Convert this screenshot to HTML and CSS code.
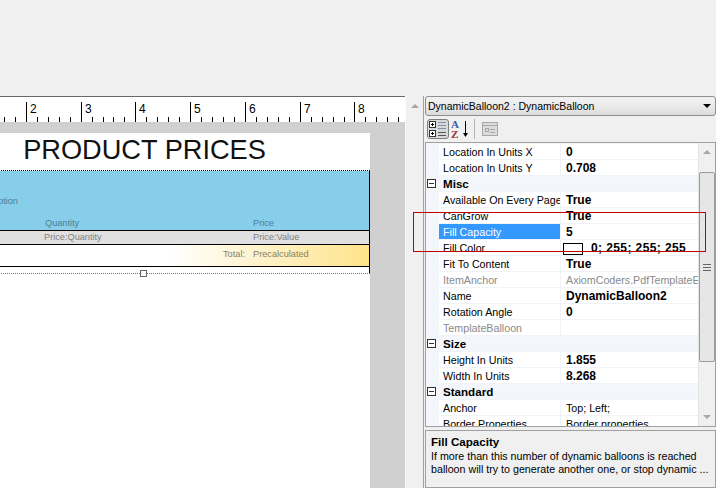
FILE: index.html
```html
<!DOCTYPE html>
<html>
<head>
    <title>Template Editor</title>
    <link rel="stylesheet" href="styles.css">
</head>
<body>

<div class="top-band"></div>

<div class="main">
    <div class="designer">
        <svg class="ruler" width="405" height="25" viewBox="0 0 405 25">
            <path class="ticks" d="M26.5 5V25M81.5 5V25M135.5 5V25M190.5 5V25M245.5 5V25M300.5 5V25M354.5 5V25M4.5 20V25M15.5 20V25M37.5 20V25M48.5 20V25M59.5 20V25M70.5 20V25M92.5 20V25M103.5 20V25M113.5 20V25M124.5 20V25M146.5 20V25M157.5 20V25M168.5 20V25M179.5 20V25M201.5 20V25M212.5 20V25M223.5 20V25M234.5 20V25M256.5 20V25M267.5 20V25M278.5 20V25M289.5 20V25M311.5 20V25M322.5 20V25M333.5 20V25M344.5 20V25M365.5 20V25M376.5 20V25M387.5 20V25M398.5 20V25"/>
            <text x="30" y="16">2</text>
            <text x="85" y="16">3</text>
            <text x="139" y="16">4</text>
            <text x="194" y="16">5</text>
            <text x="249" y="16">6</text>
            <text x="304" y="16">7</text>
            <text x="358" y="16">8</text>
        </svg>
        <div class="canvas">
            <div class="page">
                <div class="title">PRODUCT PRICES</div>
                <div class="balloon">
                    <div class="band band-head">
                        <span class="desc">Description</span>
                        <span>Quantity</span>
                        <span>Price</span>
                    </div>
                    <div class="band band-row">
                        <span></span>
                        <span class="shift">Price:Quantity</span>
                        <span>Price:Value</span>
                    </div>
                    <div class="band band-total">
                        <span></span>
                        <span class="total-label">Total:</span>
                        <span>Precalculated</span>
                    </div>
                    <div class="balloon-end"></div>
                </div>
                <div class="handle"></div>
            </div>
        </div>
    </div>

    <div class="side-scroll"><span class="arrow-up"></span></div>

    <div class="props">
        <div class="combo">
            <span>DynamicBalloon2 : DynamicBalloon</span>
            <span class="arrow-down"></span>
        </div>
        <div class="toolbar">
            <div class="tool-btn">
                <svg width="20" height="18" viewBox="0 0 20 18">
                    <rect x="1.5" y="1.5" width="6" height="6" fill="#fff" stroke="#333"/>
                    <rect x="1.5" y="10.5" width="6" height="6" fill="#fff" stroke="#333"/>
                    <path d="M3 4.5H6M4.5 3V6M3 13.5H6M4.5 12V15" stroke="#000"/>
                    <path d="M10 2.5H18M10 5.5H18M10 8.5H18" stroke="#7d93ad"/>
                    <path d="M10 12.5H18M10 15.5H18" stroke="#555"/>
                </svg>
            </div>
            <svg class="sort-icon" width="20" height="20" viewBox="0 0 20 20">
                <text class="sort-a" x="0" y="9">A</text>
                <text class="sort-z" x="0" y="19">Z</text>
                <path d="M14.5 2V16" stroke="#000"/>
                <path d="M12 14H17L14.5 18Z" fill="#000"/>
            </svg>
            <div class="tool-sep"></div>
            <svg class="pages-icon" width="18" height="18" viewBox="0 0 18 18">
                <rect x="1.5" y="2.5" width="15" height="13" fill="#dcdcdc" stroke="#a8a8a8"/>
                <path d="M1.5 5.5H16.5" stroke="#a8a8a8"/>
                <rect x="4.5" y="8.5" width="3" height="3" fill="none" stroke="#a8a8a8"/>
                <path d="M9 9.5H14M9 12.5H14" stroke="#a8a8a8"/>
            </svg>
        </div>
        <div class="grid">
            <div class="rows">
                <div class="row"><span class="name">Location In Units X</span><span class="value">0</span></div>
                <div class="row"><span class="name">Location In Units Y</span><span class="value">0.708</span></div>
                <div class="row cat"><span class="box"></span>Misc</div>
                <div class="row"><span class="name">Available On Every Page</span><span class="value">True</span></div>
                <div class="row"><span class="name">CanGrow</span><span class="value">True</span></div>
                <div class="row selected"><span class="name">Fill Capacity</span><span class="value">5</span></div>
                <div class="row"><span class="name">Fill Color</span><span class="value color-value"><i class="swatch"></i>0; 255; 255; 255</span></div>
                <div class="row"><span class="name">Fit To Content</span><span class="value">True</span></div>
                <div class="row muted"><span class="name">ItemAnchor</span><span class="value">AxiomCoders.PdfTemplateEditor</span></div>
                <div class="row"><span class="name">Name</span><span class="value">DynamicBalloon2</span></div>
                <div class="row"><span class="name">Rotation Angle</span><span class="value">0</span></div>
                <div class="row muted"><span class="name">TemplateBalloon</span><span class="value"></span></div>
                <div class="row cat"><span class="box"></span>Size</div>
                <div class="row"><span class="name">Height In Units</span><span class="value">1.855</span></div>
                <div class="row"><span class="name">Width In Units</span><span class="value">8.268</span></div>
                <div class="row cat"><span class="box"></span>Standard</div>
                <div class="row"><span class="name">Anchor</span><span class="value plain">Top; Left;</span></div>
                <div class="row"><span class="name">Border Properties</span><span class="value plain">Border properties</span></div>
            </div>
            <div class="scrollbar">
                <span class="arrow-up"></span>
                <div class="thumb"><div class="grip"></div></div>
                <span class="arrow-down small"></span>
            </div>
        </div>
        <div class="help">
            <div class="help-title">Fill Capacity</div>
            <div class="help-text">If more than this number of dynamic balloons is reached<br>balloon will try to generate another one, or stop dynamic ...</div>
        </div>
    </div>
</div>

<div class="red-box"></div>

</body>
</html>
```

FILE: styles.css
```css
* {
    box-sizing: border-box;
    margin: 0;
    padding: 0;
}
body {
    font-family: 'Liberation Sans', Arial, sans-serif;
    font-size: 10.7px;
    background-color: #f0f0f0;
    width: 716px;
    height: 488px;
    overflow: hidden;
    position: relative;
}
.top-band {
    height: 96px;
    background-color: #f0f0f0;
}
.main {
    display: flex;
    height: 392px;
}

/* designer side */
.designer {
    width: 405px;
    display: flex;
    flex-direction: column;
    overflow: hidden;
    border-top: 1px solid #696969;
}
.ruler {
    display: block;
    flex: none;
    background-color: #fff;
}
.ruler .ticks {
    stroke: #000;
    fill: none;
}
.ruler text {
    font-family: 'Liberation Sans', Arial, sans-serif;
    font-size: 12px;
    fill: #000;
}
.canvas {
    flex: 1;
    background-color: #d0d0d0;
    padding-top: 11px;
    overflow: hidden;
}
.page {
    width: 453px;
    height: 400px;
    margin-left: -83px;
    background-color: #fff;
    position: relative;
}
.title {
    height: 38px;
    padding-left: 2px;
    font-size: 27.2px;
    line-height: 33px;
    text-align: center;
    color: #111;
    border-bottom: 1px dotted #000;
}
.balloon {
    border-right: 1px solid #000;
    border-bottom: 1px dotted #777;
    height: 103px;
}
.band {
    display: grid;
    grid-template-columns: 128px 208px 1fr;
    font-size: 9.2px;
    border-bottom: 1px solid #000;
}
.band-head {
    height: 60px;
    background-color: #87ceeb;
    color: #4b7d96;
    align-items: end;
    padding-bottom: 2px;
}
.desc {
    padding-left: 55px;
    margin-bottom: 22px;
}
.band-row {
    height: 14px;
    background-color: #e0e0e0;
    color: #808080;
    line-height: 13px;
}
.shift {
    margin-left: -1px;
}
.band-total {
    height: 22px;
    background: linear-gradient(to right, #fff 56%, #ffe38a 100%);
    color: #8a8060;
    line-height: 19px;
}
.total-label {
    text-align: right;
    padding-right: 8px;
}
.handle {
    position: absolute;
    left: 223px;
    top: 137px;
    width: 7px;
    height: 7px;
    background-color: #fff;
    border: 1px solid #666;
}

.side-scroll {
    width: 19px;
    background-color: #f0f0f0;
    border-left: 1px solid #fafafa;
    border-right: 1px solid #a0a0a0;
    position: relative;
}
.side-scroll .arrow-up {
    position: absolute;
    left: 5px;
    top: 8px;
}
.arrow-up {
    display: block;
    width: 0;
    height: 0;
    border-left: 4px solid transparent;
    border-right: 4px solid transparent;
    border-bottom: 4px solid #a6a6a6;
}
.arrow-down {
    display: block;
    width: 0;
    height: 0;
    border-left: 4px solid transparent;
    border-right: 4px solid transparent;
    border-top: 4px solid #000;
}
.arrow-down.small {
    border-top-color: #a6a6a6;
}

/* property grid */
.props {
    width: 292px;
    display: flex;
    flex-direction: column;
    padding-left: 1px;
}
.combo {
    height: 20px;
    flex: none;
    display: flex;
    align-items: center;
    justify-content: space-between;
    padding: 0 4px 0 2px;
    border: 1px solid #8e8f8f;
    border-radius: 3px;
    font-size: 10.5px;
    background: linear-gradient(#f2f2f2 0%, #ebebeb 50%, #dadada 100%);
}
.toolbar {
    height: 26px;
    flex: none;
    display: flex;
    align-items: center;
    padding-left: 2px;
}
.tool-btn {
    width: 22px;
    height: 20px;
    display: flex;
    align-items: center;
    justify-content: center;
    background-color: #d9d9d9;
    border: 1px solid #7d7d7d;
    border-radius: 3px;
}
.sort-icon {
    margin-left: 2px;
}
.sort-icon text {
    font-family: 'Liberation Serif', serif;
    font-size: 11px;
    font-weight: bold;
}
.sort-a {
    fill: #2f5fb0;
}
.sort-z {
    fill: #a03030;
}
.tool-sep {
    width: 1px;
    height: 20px;
    margin-left: 3px;
    background-color: #b4b4b4;
}
.pages-icon {
    margin-left: 6px;
}
.grid {
    height: 285px;
    flex: none;
    display: flex;
    background-color: #fff;
    border: 1px solid #a0a0a0;
    overflow: hidden;
}
.rows {
    flex: 1;
    overflow: hidden;
    background-color: #f3f6fa;
    padding-top: 1px;
}
.row {
    height: 16px;
    display: flex;
    margin-left: 13px;
    line-height: 15px;
    background-color: #fff;
    border-bottom: 1px solid #f0f4f8;
    white-space: nowrap;
    overflow: hidden;
}
.name {
    width: 122px;
    flex: none;
    padding: 1px 0 0 4px;
    border-right: 1px solid #f0f4f8;
    overflow: hidden;
}
.value {
    padding: 2px 0 0 5px;
    font-size: 12px;
    font-weight: bold;
    display: flex;
    align-items: center;
}
.color-value {
    letter-spacing: 0.4px;
}
.plain {
    font-size: 10.7px;
    font-weight: normal;
}
.cat {
    margin-left: 0;
    background-color: #f3f6fa;
    font-size: 11.6px;
    font-weight: bold;
    align-items: center;
}
.box {
    width: 9px;
    height: 9px;
    margin: 0 7px 0 1px;
    border: 1px solid #333;
    background: linear-gradient(#333, #333) center / 5px 1px no-repeat #fff;
}
.muted .name, .muted .value {
    color: #8a8a8a;
    font-size: 10.7px;
    font-weight: normal;
}
.selected .name {
    background-color: #3399ff;
    color: #fff;
}
.swatch {
    width: 20px;
    height: 12px;
    margin: 0 8px 0 -3px;
    background-color: #fff;
    border: 1px solid #000;
}
.scrollbar {
    width: 17px;
    flex: none;
    background-color: #f0f0f0;
    border-left: 1px solid #e4e4e4;
    position: relative;
}
.scrollbar .arrow-up {
    position: absolute;
    left: 4px;
    top: 7px;
}
.scrollbar .arrow-down {
    position: absolute;
    left: 4px;
    bottom: 7px;
}
.thumb {
    position: absolute;
    left: 0;
    top: 29px;
    width: 16px;
    height: 190px;
    background-color: #e6e6e6;
    border: 1px solid #9a9a9a;
    border-radius: 2px;
    display: flex;
    align-items: center;
    justify-content: center;
}
.grip {
    width: 8px;
    height: 7px;
    border-top: 1px solid #666;
    border-bottom: 1px solid #666;
    background: linear-gradient(#666, #666) center / 8px 1px no-repeat;
}
.help {
    flex: 1;
    min-height: 0;
    margin-top: 3px;
    padding: 3px 5px;
    background-color: #f0f0f0;
    border: 1px solid #a0a0a0;
    line-height: 13px;
    white-space: nowrap;
    overflow: hidden;
}
.help-title {
    font-size: 11.6px;
    font-weight: bold;
    margin-bottom: 1px;
    line-height: 15px;
}
.red-box {
    position: absolute;
    left: 413px;
    top: 212px;
    width: 293px;
    height: 40px;
    border: 1px solid #c00000;
}
```
